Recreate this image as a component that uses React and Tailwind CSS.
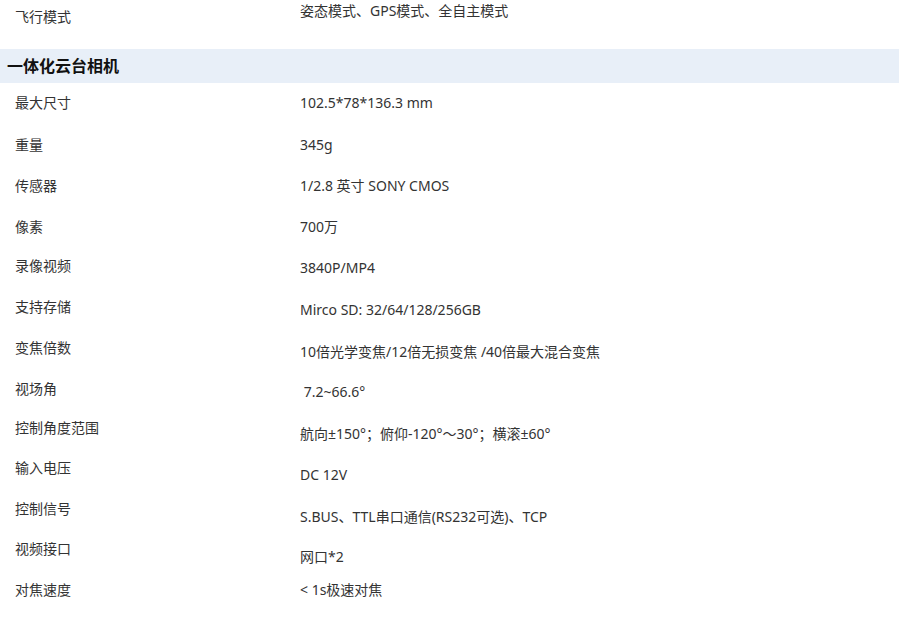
import React from 'react';

const rows = [
  { label: '最大尺寸', value: '102.5*78*136.3 mm', h: 'h-[42px]', vpt: 'pt-[10px]' },
  { label: '重量', value: '345g', h: 'h-[41px]', vpt: 'pt-[10px]' },
  { label: '传感器', value: '1/2.8 英寸 SONY CMOS', h: 'h-[41px]', vpt: 'pt-[10px]' },
  { label: '像素', value: '700万', h: 'h-[39px]', vpt: 'pt-[10px]' },
  { label: '录像视频', value: '3840P/MP4', h: 'h-[41px]', vpt: 'pt-[12px]' },
  { label: '支持存储', value: 'Mirco SD: 32/64/128/256GB', h: 'h-[41px]', vpt: 'pt-[13px]' },
  { label: '变焦倍数', value: '10倍光学变焦/12倍无损变焦 /40倍最大混合变焦', h: 'h-[41px]', vpt: 'pt-[14px]' },
  { label: '视场角', value: '\u00a07.2~66.6°', h: 'h-[39px]', vpt: 'pt-[13px]' },
  { label: '控制角度范围', value: '航向±150°；俯仰-120°～30°；横滚±60°', h: 'h-[40px]', vpt: 'pt-[16px]' },
  { label: '输入电压', value: 'DC 12V', h: 'h-[41px]', vpt: 'pt-[17px]' },
  { label: '控制信号', value: 'S.BUS、TTL串口通信(RS232可选)、TCP', h: 'h-[40px]', vpt: 'pt-[18px]' },
  { label: '视频接口', value: '网口*2', h: 'h-[41px]', vpt: 'pt-[18px]' },
  { label: '对焦速度', value: '< 1s极速对焦', h: 'h-[38px]', vpt: 'pt-[10px]' },
];

const SpecRow = ({ label, value, h, vpt }) => (
  <div className={`flex ${h}`}>
    <div className="w-[300px] pl-[15px] pt-[10px] leading-[20px]">{label}</div>
    <div className={`flex-1 ${vpt} leading-[20px]`}>{value}</div>
  </div>
);

export default function App() {
  return (
    <div
      className="w-[899px] h-[618px] overflow-hidden bg-white text-[14px] text-[#333]"
      style={{ fontFamily: '"Noto Sans", "Noto Sans CJK SC", sans-serif' }}
    >
      <div className="flex h-[49px]">
        <div className="w-[300px] pl-[15px] pt-[7px] leading-[20px]">飞行模式</div>
        <div className="flex-1 pt-[1px] leading-[20px]">姿态模式、GPS模式、全自主模式</div>
      </div>

      <div className="h-[34px] bg-[#e8eff8] pl-[7px] flex items-center">
        <h3 className="text-[16px] font-bold text-[#111] leading-[20px]">一体化云台相机</h3>
      </div>

      {rows.map((r) => (
        <SpecRow key={r.label} {...r} />
      ))}
    </div>
  );
}
